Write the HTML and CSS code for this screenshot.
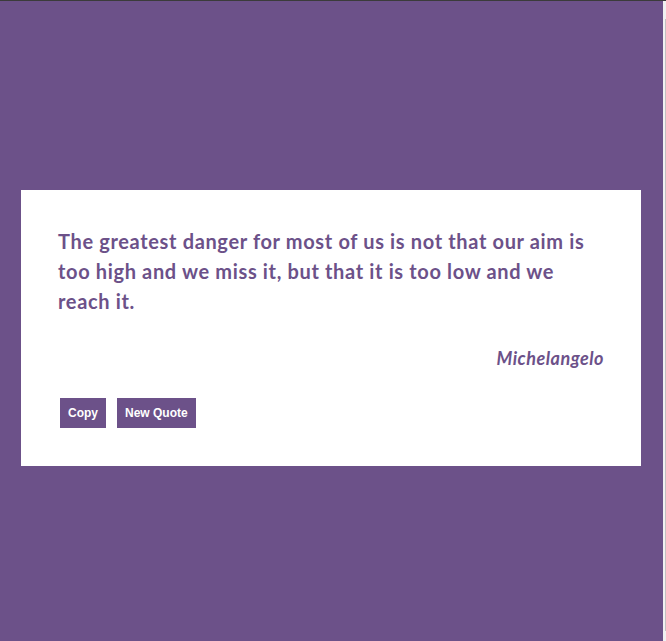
FILE: index.html
```html
<!DOCTYPE html>
<html lang="en">
<head>
<meta charset="utf-8">
<title>Random Quote</title>
<link rel="stylesheet" href="styles.css">
</head>
<body>
<div class="page">
  <div class="quote-box">
    <p class="quote-text">The greatest danger for most of us is not that our aim is too high and we miss it, but that it is too low and we reach it.</p>
    <p class="quote-author">Michelangelo</p>
    <div class="actions">
      <button class="btn">Copy</button>
      <button class="btn">New Quote</button>
    </div>
  </div>
</div>
<div class="scroll-strip"><div class="scroll-thumb"></div></div>
</body>
</html>
```
FILE: styles.css
```css
html, body {
  margin: 0;
  padding: 0;
}
body {
  background: #6c5189;
  min-height: 641px;
  border-top: 1px solid #3b3b3b;
  box-sizing: border-box;
  font-family: "Lato", "Open Sans", sans-serif;
}
.page {
  width: 663px;
  padding-top: 189px;
  padding-left: 21px;
  box-sizing: border-box;
}
.quote-box {
  width: 620px;
  height: 276px;
  box-sizing: border-box;
  background: #ffffff;
  padding: 36px 37px 0 37px;
  color: #6c5189;
}
.quote-text {
  margin: 0;
  font-size: 20px;
  font-weight: 700;
  line-height: 30px;
  letter-spacing: 0.65px;
}
.quote-author {
  margin: 31px 0 0 0;
  text-align: right;
  font-size: 18px;
  font-weight: 700;
  font-style: italic;
  line-height: 22px;
  letter-spacing: 0.5px;
}
.actions {
  display: flex;
  gap: 11px;
  margin-top: 29px;
  padding-left: 2px;
}
.btn {
  font-family: "Liberation Sans", Arial, sans-serif;
  font-weight: 700;
  font-size: 12px;
  color: #ffffff;
  background: #6c5189;
  border: none;
  border-radius: 0;
  height: 30px;
  padding: 0 8px;
  margin: 0;
}
.scroll-strip {
  position: fixed;
  top: 1px;
  right: 0;
  width: 3px;
  bottom: 0;
  background: #f1f1f1;
}
.scroll-thumb {
  position: absolute;
  top: 18px;
  bottom: 10px;
  right: 0;
  width: 1px;
  background: #c1c1c1;
}
```
